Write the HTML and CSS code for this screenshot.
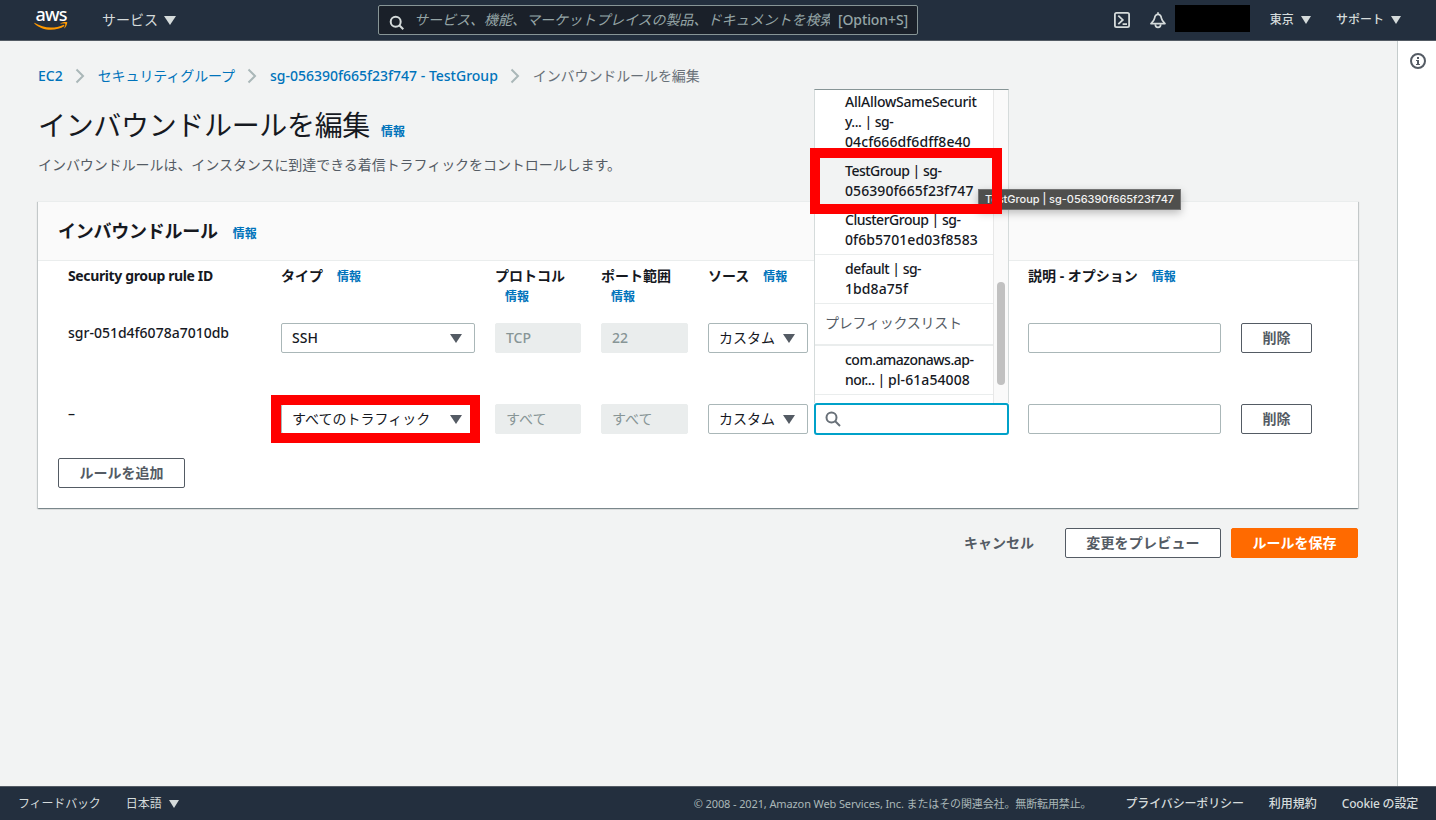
FILE: index.html
```
<!DOCTYPE html>
<html lang="ja">
<head>
    <meta charset="UTF-8">
    <meta name="viewport" content="width=device-width, initial-scale=1.0">
    <title>インバウンドルールを編集 | EC2 Management Console</title>
    <link rel="stylesheet" href="styles.css">
</head>
<body>
    <!-- Top navigation -->
    <header class="topnav">
        <a class="logo" href="#">
            <span class="logo-text">aws</span>
            <svg class="logo-smile" width="34" height="9" viewBox="0 0 34 9">
                <path d="M0.5 0.8C9.5 6.6 20.5 7 29.8 2.7L30.6 3.9C21.5 9.6 8 9 0.3 1.4z" fill="#ff9900"/>
                <path d="M26.4 1.2C28.5-.1 32-.2 33-.1 33.7.2 32.8 4.4 30.7 6.2 30.4 6.4 30.2 6.2 30.3 5.9 31 4.3 31.5 2.3 31.2 1.7 30.7 1.2 28.3 1.4 26.7 1.7z" fill="#ff9900"/>
            </svg>
        </a>
        <a class="services" href="#">サービス <i class="caret"></i></a>
        <div class="search">
            <svg width="16" height="16" viewBox="0 0 16 16" fill="none" stroke="#d5dbdb" stroke-width="2">
                <circle cx="6.7" cy="6.7" r="5"/>
                <path d="M10.3 10.3l4 4"/>
            </svg>
            <span class="search-placeholder">サービス、機能、マーケットプレイスの製品、ドキュメントを検索</span>
            <span class="search-key">[Option+S]</span>
        </div>
        <div class="topnav-right">
            <svg class="shell-icon" width="16" height="16" viewBox="0 0 16 16" fill="none" stroke="#d5dbdb" stroke-width="1.8">
                <rect x="0.9" y="0.9" width="14.2" height="14.2" rx="1.6"/>
                <path d="M4.3 3.6L8.8 7.9 4.3 12.2M8.6 12.2h4.4"/>
            </svg>
            <svg class="bell-icon" width="16" height="17" viewBox="0 0 16 17" fill="none" stroke="#d5dbdb" stroke-width="1.7" stroke-linejoin="round">
                <path d="M8 2.3C5.6 2.3 4.9 4 4.6 6.2 4.3 8.3 3.2 9.6 1 11.6h14C12.8 9.6 11.7 8.3 11.4 6.2 11.1 4 10.4 2.3 8 2.3zM8 2.4V0.3"/>
                <path d="M5.3 12.2c0 4.1 5.4 4.1 5.4 0"/>
            </svg>
            <span class="account"></span>
            <a class="region" href="#">東京 <i class="caret"></i></a>
            <a class="support" href="#">サポート <i class="caret"></i></a>
        </div>
    </header>

    <div class="layout">
        <main class="content">
            <nav class="breadcrumb">
                <a class="latin" href="#">EC2</a>
                <svg class="chevron" width="10" height="16" viewBox="0 0 10 16"><path d="M1.5 1.5L8 8l-6.5 6.5"/></svg>
                <a class="kana" href="#">セキュリティグループ</a>
                <svg class="chevron" width="10" height="16" viewBox="0 0 10 16"><path d="M1.5 1.5L8 8l-6.5 6.5"/></svg>
                <a class="latin" href="#">sg-056390f665f23f747 - TestGroup</a>
                <svg class="chevron" width="10" height="16" viewBox="0 0 10 16"><path d="M1.5 1.5L8 8l-6.5 6.5"/></svg>
                <span class="kana">インバウンドルールを編集</span>
            </nav>

            <div class="page-title">
                <h1>インバウンドルールを編集</h1>
                <a class="info" href="#">情報</a>
            </div>
            <p class="description">インバウンドルールは、インスタンスに到達できる着信トラフィックをコントロールします。</p>

            <section class="card">
                <div class="card-header">
                    <h2>インバウンドルール</h2>
                    <a class="info" href="#">情報</a>
                </div>

                <div class="rules">
                    <div class="rule-row rule-head">
                        <div class="id-head">Security group rule ID</div>
                        <div>タイプ<a class="info" href="#">情報</a></div>
                        <div>プロトコル <a class="info wrap" href="#">情報</a></div>
                        <div>ポート範囲 <a class="info wrap" href="#">情報</a></div>
                        <div>ソース<a class="info" href="#">情報</a></div>
                        <div>説明 - オプション<a class="info" href="#">情報</a></div>
                        <div></div>
                    </div>

                    <div class="rule-row">
                        <div class="latin">sgr-051d4f6078a7010db</div>
                        <div class="select latin">SSH <i class="caret"></i></div>
                        <div class="disabled latin">TCP</div>
                        <div class="disabled latin">22</div>
                        <div class="source">
                            <div class="select">カスタム <i class="caret"></i></div>
                        </div>
                        <div class="field"></div>
                        <button class="btn" type="button">削除</button>
                    </div>

                    <div class="rule-row">
                        <div class="latin">–</div>
                        <div class="select marked">すべてのトラフィック <i class="caret"></i></div>
                        <div class="disabled">すべて</div>
                        <div class="disabled">すべて</div>
                        <div class="source">
                            <div class="select">カスタム <i class="caret"></i></div>
                            <div class="source-search">
                                <svg width="16" height="16" viewBox="0 0 16 16" fill="none" stroke="#687078" stroke-width="2">
                                    <circle cx="6.5" cy="6.5" r="5"/>
                                    <path d="M10 10l5 5"/>
                                </svg>

                                <!-- Security group suggestions -->
                                <div class="dropdown">
                                    <div class="options">
                                        <div class="option"><span class="long-name">AllAllowSameSecurit</span><br>y... | sg-<br><span class="sg-id">04cf666df6dff8e40</span></div>
                                        <div class="option active">TestGroup | sg-<br><span class="sg-id">056390f665f23f747</span></div>
                                        <div class="option">ClusterGroup | sg-<br><span class="sg-id">0f6b5701ed03f8583</span></div>
                                        <div class="option">default | sg-<br><span class="sg-id">1bd8a75f</span></div>
                                        <div class="option-group">プレフィックスリスト</div>
                                        <div class="option">com.amazonaws.ap-<br>nor... | <span class="sg-id">pl-61a54008</span></div>
                                    </div>
                                    <div class="scrollbar"><div class="thumb"></div></div>
                                </div>
                                <div class="tooltip">TestGroup | sg-056390f665f23f747</div>
                                <div class="option-mark"></div>
                            </div>
                        </div>
                        <div class="field"></div>
                        <button class="btn" type="button">削除</button>
                    </div>
                </div>

                <button class="btn add-rule" type="button">ルールを追加</button>
            </section>

            <div class="actions">
                <button class="btn link" type="button">キャンセル</button>
                <button class="btn preview" type="button">変更をプレビュー</button>
                <button class="btn primary" type="button">ルールを保存</button>
            </div>
        </main>

        <aside class="help-panel">
            <svg width="16" height="16" viewBox="0 0 16 16" fill="none">
                <circle cx="8" cy="8" r="7" stroke="#545b64" stroke-width="2"/>
                <path d="M7 4h2v2H7zM6 7h3v4h1v1H6v-1h1V8H6z" fill="#545b64"/>
            </svg>
        </aside>
    </div>

    <footer class="footer">
        <a class="feedback" href="#">フィードバック</a>
        <a class="language" href="#">日本語 <i class="caret"></i></a>
        <span class="copyright">© 2008 - 2021, Amazon Web Services, Inc. またはその関連会社。無断転用禁止。</span>
        <a class="privacy" href="#">プライバシーポリシー</a>
        <a class="terms" href="#">利用規約</a>
        <a class="cookie" href="#">Cookie の設定</a>
    </footer>
</body>
</html>
```

FILE: styles.css
```
* {
    box-sizing: border-box;
    margin: 0;
    padding: 0;
}

body {
    font-family: "Noto Sans", "Noto Sans CJK JP", sans-serif;
    font-size: 14px;
    line-height: 20px;
    height: 820px;
    display: flex;
    flex-direction: column;
    background: #f2f3f3;
    color: #16191f;
    overflow: hidden;
}

a {
    color: #0073bb;
    text-decoration: none;
}

.latin {
    font-weight: 500;
}

.kana {
    letter-spacing: -0.1px;
}

.caret {
    display: inline-block;
    border-left: 6px solid transparent;
    border-right: 6px solid transparent;
    border-top: 9px solid #545b64;
}

/* Top navigation */
.topnav {
    height: 41px;
    flex-shrink: 0;
    display: flex;
    align-items: center;
    padding: 0 35px;
    background: #232f3e;
    border-bottom: 1px solid #545b64;
}

.topnav a,
.footer a {
    color: #d5dbdb;
}

.topnav .caret,
.footer .caret {
    border-top-color: #d5dbdb;
}

.logo {
    width: 34px;
    height: 24px;
    margin: -2px 1px 0 -1px;
    display: flex;
    flex-direction: column;
    align-items: center;
}

.topnav .logo-text {
    color: #fff;
    font-size: 18px;
    font-weight: 500;
    line-height: 15px;
    height: 15px;
    letter-spacing: -0.8px;
}

.logo-smile {
    flex-shrink: 0;
}

.services {
    width: 80px;
    margin-left: 33px;
    white-space: nowrap;
}

.services .caret {
    margin-left: 2px;
}

.search {
    width: 540px;
    height: 30px;
    margin-left: 196px;
    padding: 0 9px 0 10px;
    display: flex;
    align-items: center;
    background: #1a2029;
    border: 1px solid #879596;
    border-radius: 2px;
    color: #95a5a6;
}

.search svg {
    flex-shrink: 0;
    margin-top: 6px;
}

.search-placeholder {
    width: 416px;
    margin-left: 9px;
    overflow: hidden;
    white-space: nowrap;
    font-style: italic;
}

.search-key {
    margin-left: 8px;
    font-weight: 500;
    letter-spacing: -0.1px;
    white-space: nowrap;
}

.topnav-right {
    flex: 1;
    display: flex;
    align-items: center;
    justify-content: flex-end;
    font-size: 12px;
    font-weight: 500;
    white-space: nowrap;
}

.topnav-right .caret,
.footer .caret {
    border-left-width: 5px;
    border-right-width: 5px;
    border-top-width: 8px;
    margin-left: 4px;
}

.bell-icon {
    margin-left: 20px;
}

.account {
    width: 75px;
    height: 27px;
    margin: -4px 20px 0 9px;
    background: #000;
}

.support {
    margin-left: 25px;
}

/* Page */
.layout {
    flex: 1;
    display: flex;
    min-height: 0;
}

.content {
    flex: 1;
    padding: 25px 39px 0 38px;
}

.help-panel {
    width: 39px;
    padding: 12px 0 0 12px;
    background: #fff;
    border-left: 1px solid #c5cccc;
}

.breadcrumb {
    display: flex;
    align-items: center;
    height: 20px;
    color: #687078;
    white-space: nowrap;
}

.chevron {
    margin: 0 13px 0 12px;
    fill: none;
    stroke: #aab7b8;
    stroke-width: 2;
}

.page-title {
    display: flex;
    align-items: baseline;
    margin-top: 21px;
    height: 36px;
}

h1 {
    font-size: 28px;
    font-weight: 400;
    line-height: 36px;
    letter-spacing: -0.33px;
}

.info {
    font-size: 12px;
    font-weight: 700;
    margin-left: 11px;
}

.description {
    margin-top: 12px;
    color: #545b64;
    letter-spacing: -0.06px;
}

/* Rules card */
.card {
    height: 307px;
    margin-top: 26px;
    background: #fff;
    border-top: 1px solid #eaeded;
    box-shadow: 0 1px 1px 0 rgba(0, 28, 36, 0.3), 1px 1px 1px 0 rgba(0, 28, 36, 0.15), -1px 1px 1px 0 rgba(0, 28, 36, 0.15);
}

.card-header {
    height: 59px;
    padding: 18px 20px 0;
    display: flex;
    align-items: baseline;
    background: #fafafa;
    border-bottom: 1px solid #eaeded;
}

h2 {
    font-size: 18px;
    line-height: 22px;
    letter-spacing: -0.25px;
}

.card-header .info {
    margin-left: 15px;
}

.rules {
    padding-left: 30px;
}

.rule-row {
    display: grid;
    grid-template-columns: 193px 194px 86px 87px 300px 193px 71px;
    column-gap: 20px;
    align-items: start;
    height: 81px;
}

.rule-head {
    height: 62px;
    padding-top: 5px;
    font-weight: 700;
}

.rule-head .info {
    margin-left: 14px;
}

.rule-head .wrap {
    display: block;
    margin-left: 10px;
    padding-top: 1px;
}

.id-head {
    letter-spacing: -0.37px;
}

.select,
.field,
.disabled {
    height: 30px;
    padding: 4px 10px;
    border: 1px solid #aab7b8;
    border-radius: 2px;
    background: #fff;
    white-space: nowrap;
}

.select {
    display: flex;
    align-items: center;
    justify-content: space-between;
    padding-right: 12px;
}

.disabled {
    background: #eaeded;
    border-color: #eaeded;
    color: #879596;
}

.marked {
    position: relative;
}

/* Red highlight frame */
.marked::after {
    content: "";
    box-sizing: border-box;
    position: absolute;
    left: -11px;
    top: -10px;
    width: 209px;
    height: 48px;
    border: 10px solid #f00;
}

.source {
    display: flex;
    gap: 6px;
}

.source .select {
    width: 100px;
}

.source-search {
    position: relative;
    width: 195px;
    height: 32px;
    margin: -1px -1px 0 0;
    padding: 6px 9px;
    border: 2px solid #00a1c9;
    border-radius: 3px;
    background: #fff;
}

/* Suggestions open upwards from the search field */
.dropdown {
    position: absolute;
    left: -2px;
    bottom: 30px;
    width: 195px;
    height: 314px;
    display: flex;
    background: #fff;
    border: 1px solid #d5dbdb;
    border-top-color: #879596;
    border-bottom: 0;
    overflow: hidden;
}

.options {
    width: 178px;
    margin-top: -2px;
}

.option {
    padding: 4px 0 4px 30px;
    border-bottom: 1px solid #eaeded;
    font-weight: 500;
    letter-spacing: -0.5px;
    white-space: nowrap;
}

.option.active {
    background: #f2f3f3;
}

.long-name {
    letter-spacing: -0.25px;
}

.sg-id {
    letter-spacing: 0.08px;
}

.option-group {
    height: 42px;
    padding: 9px 10px;
    color: #545b64;
    border-bottom: 2px solid #eaeded;
    letter-spacing: -0.25px;
}

.scrollbar {
    flex: 1;
    padding: 192px 3px 0;
    background: #fafafa;
    border-left: 1px solid #e8e8e8;
}

.thumb {
    width: 8px;
    height: 103px;
    border-radius: 4px;
    background: #c1c1c1;
}

.tooltip {
    position: absolute;
    left: 162px;
    bottom: 223px;
    width: 203px;
    height: 21px;
    padding-left: 6px;
    background: #4f4f4d;
    border: 1px solid #737373;
    box-shadow: 0 3px 8px rgba(0, 0, 0, 0.25);
    color: #f2f2f2;
    font-family: Inter, sans-serif;
    font-size: 11px;
    font-weight: 500;
    line-height: 19px;
    letter-spacing: -0.03px;
    white-space: nowrap;
}

.option-mark {
    position: absolute;
    left: -6px;
    bottom: 219px;
    width: 192px;
    height: 66px;
    border: 10px solid #f00;
}

/* Buttons */
.btn {
    height: 30px;
    padding: 0 20px;
    font-family: inherit;
    font-size: 14px;
    font-weight: 700;
    line-height: 20px;
    color: #545b64;
    background: #fff;
    border: 1px solid #545b64;
    border-radius: 2px;
    white-space: nowrap;
}

.add-rule {
    display: block;
    width: 127px;
    margin: -27px 0 0 20px;
}

.actions {
    display: flex;
    justify-content: flex-end;
    gap: 10px;
    margin-top: 20px;
}

.btn.link {
    background: transparent;
    border-color: transparent;
}

.btn.preview {
    width: 156px;
    letter-spacing: 0.2px;
}

.btn.primary {
    width: 127px;
    background: #ff6a00;
    border-color: #ff6a00;
    color: #fff;
}

/* Footer */
.footer {
    height: 34px;
    flex-shrink: 0;
    display: flex;
    align-items: center;
    padding: 0 18px;
    background: #232f3e;
    border-top: 1px solid #545b64;
    font-size: 12px;
    white-space: nowrap;
}

.feedback {
    margin-right: 25px;
    letter-spacing: -0.15px;
}

.language .caret {
    margin-left: 4px;
}

.copyright {
    margin-left: auto;
    padding-top: 1px;
    color: #aab7b8;
    font-size: 11px;
    letter-spacing: -0.12px;
}

.privacy {
    margin-left: 34px;
    font-weight: 500;
    letter-spacing: -0.15px;
}

.terms,
.cookie {
    margin-left: 25px;
    font-weight: 500;
}

.cookie {
    letter-spacing: -0.2px;
}
```
